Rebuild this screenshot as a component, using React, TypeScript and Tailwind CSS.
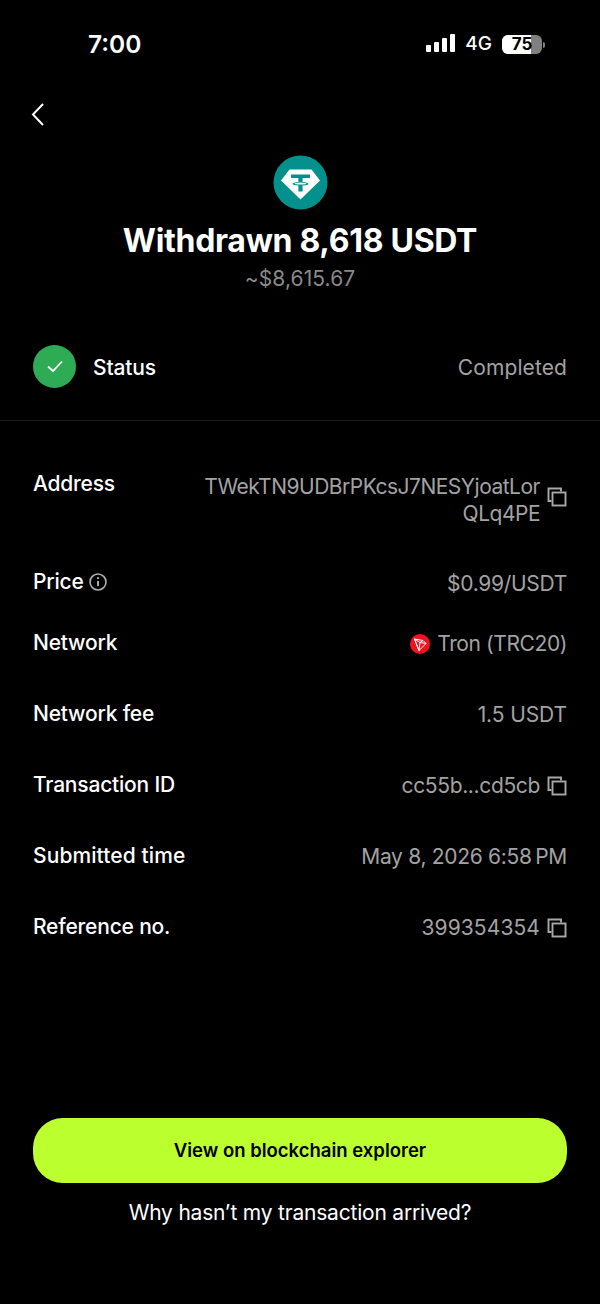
import React, { FC, ReactNode } from "react";

const font = { fontFamily: "Inter, 'Liberation Sans', sans-serif" };

const CopyIcon: FC = () => (
    <svg width="20" height="20" viewBox="0 0 20 20" fill="none" stroke="#a8a8a8" strokeWidth="1.9" className="shrink-0">
        <path d="M4.5 14H1.5V1.5H14V4.5" />
        <rect x="5.5" y="5.5" width="13" height="13" />
    </svg>
);

const TetherLogo: FC = () => (
    <svg width="55" height="55" viewBox="0 0 55 55">
        <circle cx="27.5" cy="27.5" r="27" fill="#04908c" />
        <path d="M16.5 14.5H38.5L47 25.5L27.5 44.5L8 25.5Z" fill="#fff" />
        <path d="M18 19.5H37V23H29.6V27C33 27.2 35.5 27.9 35.5 28.8C35.5 29.7 33 30.4 29.6 30.6V36.5H25.4V30.6C22 30.4 19.5 29.7 19.5 28.8C19.5 27.9 22 27.2 25.4 27V23H18Z" fill="#04908c" />
        <ellipse cx="27.5" cy="28.6" rx="6" ry="1" fill="#fff" />
    </svg>
);

const TronLogo: FC = () => (
    <svg width="20" height="20" viewBox="0 0 20 20" className="shrink-0">
        <circle cx="10" cy="10" r="10" fill="#f5101f" />
        <path d="M4.5 5L13 6.5L16 9.5L9 16.5Z M4.5 5L9 16.5L10 8.5Z M10 8.5L13 6.5 M10 8.5L16 9.5" fill="none" stroke="#fff" strokeWidth="1" strokeLinejoin="round" />
    </svg>
);

const InfoIcon: FC = () => (
    <svg width="18" height="18" viewBox="0 0 18 18" fill="none" stroke="#b0b0b0" strokeWidth="1.6">
        <circle cx="9" cy="9" r="8" />
        <path d="M9 8V13" strokeWidth="1.9" />
        <circle cx="9" cy="5.2" r="1.1" fill="#b0b0b0" stroke="none" />
    </svg>
);

const Signal: FC = () => (
    <div className="flex items-end gap-[3px] mb-[3px]">
        <div className="w-[5px] h-[7px] bg-white rounded-[1px]" />
        <div className="w-[5px] h-[10px] bg-white rounded-[1px]" />
        <div className="w-[5px] h-[14px] bg-white rounded-[1px]" />
        <div className="w-[5px] h-[18px] bg-white rounded-[1px]" />
    </div>
);

const Battery: FC = () => (
    <div className="flex items-center gap-[1px]">
        <div className="relative w-[40px] h-[19px] rounded-[6px] bg-[#808080]">
            <div className="h-full w-[29px] bg-white rounded-l-[6px]" />
            <span className="absolute inset-0 flex items-center justify-center text-[17px] leading-[19px] font-bold text-black">75</span>
        </div>
        <div className="w-[2px] h-[6px] rounded-r-full bg-[#808080]" />
    </div>
);

interface IRow {
    label: ReactNode
    height: string
    valueStyle?: string
    children: ReactNode
}

const Row: FC<IRow> = ({ label, height, valueStyle = "tracking-[-0.1px]", children }) => (
    <div className={`flex items-center justify-between px-[33px] ${height}`}>
        <div className="flex items-center gap-[5px] text-[21px] font-medium text-white tracking-[-0.2px]">{label}</div>
        <div className={`flex items-center gap-[7px] pt-[3px] text-[21px] text-[#a3a3a3] ${valueStyle}`}>{children}</div>
    </div>
);

const App: FC = () => {
    return (
        <div className="w-[600px] h-[1304px] bg-black flex flex-col overflow-hidden" style={font}>
            <div className="h-[88px] flex items-center justify-between pl-[88px] pr-[55px] pt-[1px]">
                <span className="text-[24.5px] font-semibold text-white">7:00</span>
                <div className="flex items-center gap-[10px]">
                    <Signal />
                    <span className="text-[19px] font-medium text-white">4G</span>
                    <Battery />
                </div>
            </div>
            <div className="h-[67px] pl-[28px] pt-[10px]">
                <svg width="20" height="32" viewBox="0 0 20 32" fill="none" stroke="#fff" strokeWidth="2">
                    <path d="M15 6L5 16.5L15 27" />
                </svg>
            </div>
            <div className="flex flex-col items-center">
                <TetherLogo />
                <h1 className="mt-[8px] text-[32px] leading-[45px] font-bold text-white tracking-[-0.3px]">Withdrawn 8,618 USDT</h1>
                <p className="pt-[1px] text-[21px] leading-[30px] text-[#8a8a8a] tracking-[0.1px]">~$8,615.67</p>
            </div>
            <div className="mt-[40px] flex items-center justify-between px-[33px] h-[65px] pb-[1px]">
                <div className="flex items-center gap-[17px]">
                    <div className="w-[43px] h-[43px] rounded-full bg-[#2dac55] flex items-center justify-center">
                        <svg width="20" height="20" viewBox="0 0 20 20" fill="none" stroke="#fff" strokeWidth="1.8">
                            <path d="M3 10.5L8 15L17 5.5" />
                        </svg>
                    </div>
                    <span className="pt-[3px] text-[21px] font-medium text-white tracking-[-0.15px]">Status</span>
                </div>
                <span className="pt-[4px] text-[21px] text-[#a3a3a3] tracking-[0.1px]">Completed</span>
            </div>
            <div className="mt-[21px] h-px bg-[#1a1a1a]" />
            <div className="mt-[48px] flex justify-between px-[33px] h-[96px]">
                <span className="text-[21px] leading-[30px] font-medium text-white tracking-[-0.2px]">Address</span>
                <div className="flex gap-[7px]">
                    <span className="pt-[4px] text-right text-[21px] leading-[27px] text-[#a3a3a3] tracking-[-0.5px] whitespace-nowrap">TWekTN9UDBrPKcsJ7NESYjoatLor<br />QLq4PE</span>
                    <div className="pt-[18px]"><CopyIcon /></div>
                </div>
            </div>
            <Row height="h-[34px]" valueStyle="tracking-[-0.3px]" label={<>Price <InfoIcon /></>}>$0.99/USDT</Row>
            <Row height="h-[87px]" valueStyle="tracking-[-0.4px]" label="Network"><TronLogo />Tron (TRC20)</Row>
            <Row height="h-[55px]" label="Network fee">1.5 USDT</Row>
            <Row height="h-[87px]" valueStyle="tracking-[-0.35px]" label="Transaction ID">cc55b...cd5cb<CopyIcon /></Row>
            <Row height="h-[55px]" valueStyle="tracking-[-0.3px]" label={<span className="tracking-[0.1px]">Submitted time</span>}>May 8, 2026 6:58{"\u2009"}PM</Row>
            <Row height="h-[87px]" valueStyle="tracking-[0.1px]" label="Reference no.">399354354<CopyIcon /></Row>
            <div className="flex-1" />
            <div className="px-[33px]">
                <button className="w-full h-[65px] rounded-[30px] bg-[#bcff2f] text-black text-[18.5px] font-semibold">View on blockchain explorer</button>
            </div>
            <p className="mt-[15px] mb-[76px] text-center text-[21px] leading-[30px] text-white tracking-[-0.2px]">Why hasn’t my transaction arrived?</p>
        </div>
    );
}

export default App;
